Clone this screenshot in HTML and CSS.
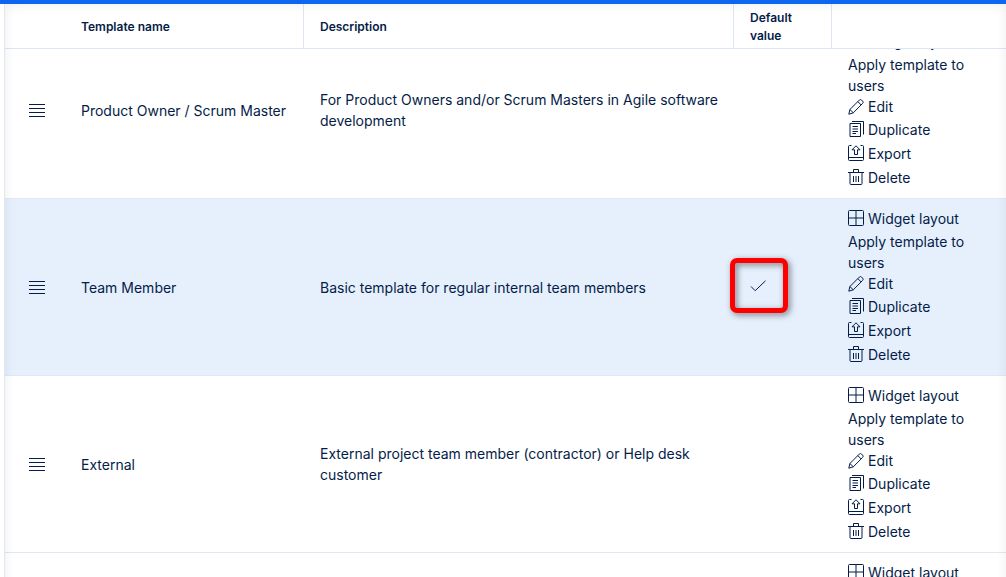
FILE: index.html
```
<!DOCTYPE html>
<html lang="en">
<head>
    <meta charset="UTF-8">
    <meta name="viewport" content="width=device-width, initial-scale=1.0">
    <title>User templates</title>
    <link rel="stylesheet" href="styles.css">
</head>
<body>
    <!-- Icon set -->
    <svg class="icon-set" aria-hidden="true">
        <symbol id="icon-grip" viewBox="0 0 16 13">
            <path d="M0 .5h16M0 4.5h16M0 8.5h16M0 12.5h16"/>
        </symbol>
        <symbol id="icon-check" viewBox="0 0 16 16">
            <path d="M1 7.5l4.2 4.2L15.500 1.800"/>
        </symbol>
        <symbol id="icon-layout" viewBox="0 0 16 16">
            <rect x=".5" y=".5" width="15" height="15" rx="1"/>
            <path d="M8 .5v15M.5 8h15"/>
        </symbol>
        <symbol id="icon-edit" viewBox="0 0 16 16">
            <path d="M.8 15.2l1.1-4.7L11.3 1.1a1.6 1.6 0 0 1 2.3 0l1 1a1.6 1.6 0 0 1 0 2.3L5.3 13.8zM9.8 2.6l3.4 3.4M1.9 10.5l3.4 3.3"/>
        </symbol>
        <symbol id="icon-duplicate" viewBox="0 0 16 16">
            <path d="M2 2.5h10.5v13H2zM4 .5h11.5v13M4.5 5.5H10M4.5 8H10M4.5 10.5H10M4.5 12.5H8"/>
        </symbol>
        <symbol id="icon-export" viewBox="0 0 16 16">
            <path d="M3.5.5h-2a1 1 0 0 0-1 1v13a1 1 0 0 0 1 1h13a1 1 0 0 0 1-1v-13a1 1 0 0 0-1-1h-2M.5 12.5h15M8 .8L4 4.8h2.5v4.7h3V4.8H12z"/>
        </symbol>
        <symbol id="icon-delete" viewBox="0 0 16 16">
            <path d="M0 3.5h16M5.5 3.5v-3h5v3M2 3.5v11a1 1 0 0 0 1 1h10a1 1 0 0 0 1-1v-11M5.5 7v6M8 7v6M10.5 7v6"/>
        </symbol>
    </svg>

    <div class="top-bar"></div>

    <div class="panel">
        <div class="table-scroll" id="table-scroll">
            <table class="templates">
                <thead>
                    <tr>
                        <th class="col-grip"></th>
                        <th class="col-name">Template name</th>
                        <th class="col-description">Description</th>
                        <th class="col-default">Default value</th>
                        <th class="col-actions"></th>
                    </tr>
                </thead>
                <tbody>
                    <tr>
                        <td class="grip"><svg><use href="#icon-grip"/></svg></td>
                        <td>Product Owner / Scrum Master</td>
                        <td>For Product Owners and/or Scrum Masters in Agile software development</td>
                        <td></td>
                        <td class="actions">
                            <a href="#" class="action"><svg><use href="#icon-layout"/></svg>Widget layout</a>
                            <a href="#" class="action-text">Apply template to users</a>
                            <a href="#" class="action"><svg><use href="#icon-edit"/></svg>Edit</a>
                            <a href="#" class="action"><svg><use href="#icon-duplicate"/></svg>Duplicate</a>
                            <a href="#" class="action"><svg><use href="#icon-export"/></svg>Export</a>
                            <a href="#" class="action"><svg><use href="#icon-delete"/></svg>Delete</a>
                        </td>
                    </tr>
                    <tr class="selected">
                        <td class="grip"><svg><use href="#icon-grip"/></svg></td>
                        <td>Team Member</td>
                        <td>Basic template for regular internal team members</td>
                        <td><span class="default-mark"><svg><use href="#icon-check"/></svg></span></td>
                        <td class="actions">
                            <a href="#" class="action"><svg><use href="#icon-layout"/></svg>Widget layout</a>
                            <a href="#" class="action-text">Apply template to users</a>
                            <a href="#" class="action"><svg><use href="#icon-edit"/></svg>Edit</a>
                            <a href="#" class="action"><svg><use href="#icon-duplicate"/></svg>Duplicate</a>
                            <a href="#" class="action"><svg><use href="#icon-export"/></svg>Export</a>
                            <a href="#" class="action"><svg><use href="#icon-delete"/></svg>Delete</a>
                        </td>
                    </tr>
                    <tr>
                        <td class="grip"><svg><use href="#icon-grip"/></svg></td>
                        <td>External</td>
                        <td>External project team member (contractor) or Help desk customer</td>
                        <td></td>
                        <td class="actions">
                            <a href="#" class="action"><svg><use href="#icon-layout"/></svg>Widget layout</a>
                            <a href="#" class="action-text">Apply template to users</a>
                            <a href="#" class="action"><svg><use href="#icon-edit"/></svg>Edit</a>
                            <a href="#" class="action"><svg><use href="#icon-duplicate"/></svg>Duplicate</a>
                            <a href="#" class="action"><svg><use href="#icon-export"/></svg>Export</a>
                            <a href="#" class="action"><svg><use href="#icon-delete"/></svg>Delete</a>
                        </td>
                    </tr>
                    <tr>
                        <td></td>
                        <td></td>
                        <td></td>
                        <td></td>
                        <td class="actions">
                            <a href="#" class="action"><svg><use href="#icon-layout"/></svg>Widget layout</a>
                        </td>
                    </tr>
                </tbody>
            </table>
        </div>
    </div>

    <script>
        // Keep the list scrolled a little, the header stays on top
        document.getElementById("table-scroll").scrollTop = 27;
    </script>
</body>
</html>
```
FILE: styles.css
```
* {
    box-sizing: border-box;
}

body {
    font-family: Inter, sans-serif;
    font-size: 14px;
    line-height: 21px;
    color: #051c48;
    background-color: #fff;
    margin: 0;
    height: 100vh;
    display: flex;
    flex-direction: column;
}

.icon-set {
    display: none;
}

svg {
    display: block;
    width: 16px;
    height: 16px;
    fill: none;
    stroke: #051c48;
    stroke-width: 1;
    flex-shrink: 0;
}

.top-bar {
    height: 4px;
    flex-shrink: 0;
    background-color: #0c66f0;
}

.panel {
    position: relative;
    flex: 1;
    min-height: 0;
    margin-left: 4px;
    border-left: 1px solid #dfe8f6;
}

/* Soft shade along the panel edges */
.panel::after {
    content: "";
    position: absolute;
    inset: 0 0 -20px 0;
    box-shadow: inset 0 0 12px rgba(0, 0, 0, 0.08);
    clip-path: inset(0 0 20px 0);
    pointer-events: none;
    z-index: 3;
}

.table-scroll {
    height: 100%;
    overflow-y: auto;
    scrollbar-width: none;
}

.templates {
    width: 100%;
    table-layout: fixed;
    border-collapse: separate;
    border-spacing: 0;
}

.templates th {
    position: sticky;
    top: 0;
    z-index: 2;
    height: 45px;
    padding: 5px 16px 3px;
    font-size: 12px;
    font-weight: 600;
    line-height: 18px;
    text-align: left;
    background-color: #fff;
    border-right: 1px solid #dfe6f3;
    border-bottom: 1px solid #dfe6f3;
}

.templates th.col-grip,
.templates th.col-actions {
    border-right: none;
}

.col-grip {
    width: 60px;
}

.col-name {
    width: 239px;
}

.col-default {
    width: 98px;
}

.col-actions {
    width: 174px;
}

.templates td {
    padding: 8px 16px;
    vertical-align: middle;
    border-bottom: 1px solid #dfe8f3;
}

.templates td.grip {
    padding-left: 24px;
}

.templates td.actions {
    padding: 7px 16px 9px;
}

.grip svg {
    height: 13px;
}

.selected td {
    background-color: #e6f0fd;
}

.action {
    display: flex;
    align-items: center;
    gap: 4px;
    height: 24px;
    color: inherit;
    text-decoration: none;
}

.action-text {
    display: block;
    margin-top: 1px;
    color: inherit;
    text-decoration: none;
}

.action-text + .action {
    height: 21px;
}

.default-mark {
    position: relative;
    display: block;
    width: 16px;
}

/* Red frame around the default template mark */
.default-mark::after {
    content: "";
    position: absolute;
    inset: -21px -22px -18px -20px;
    border: 5px solid #fe0000;
    border-radius: 7px;
    filter: drop-shadow(2px 2px 3px rgba(0, 0, 0, 0.5));
}
```
